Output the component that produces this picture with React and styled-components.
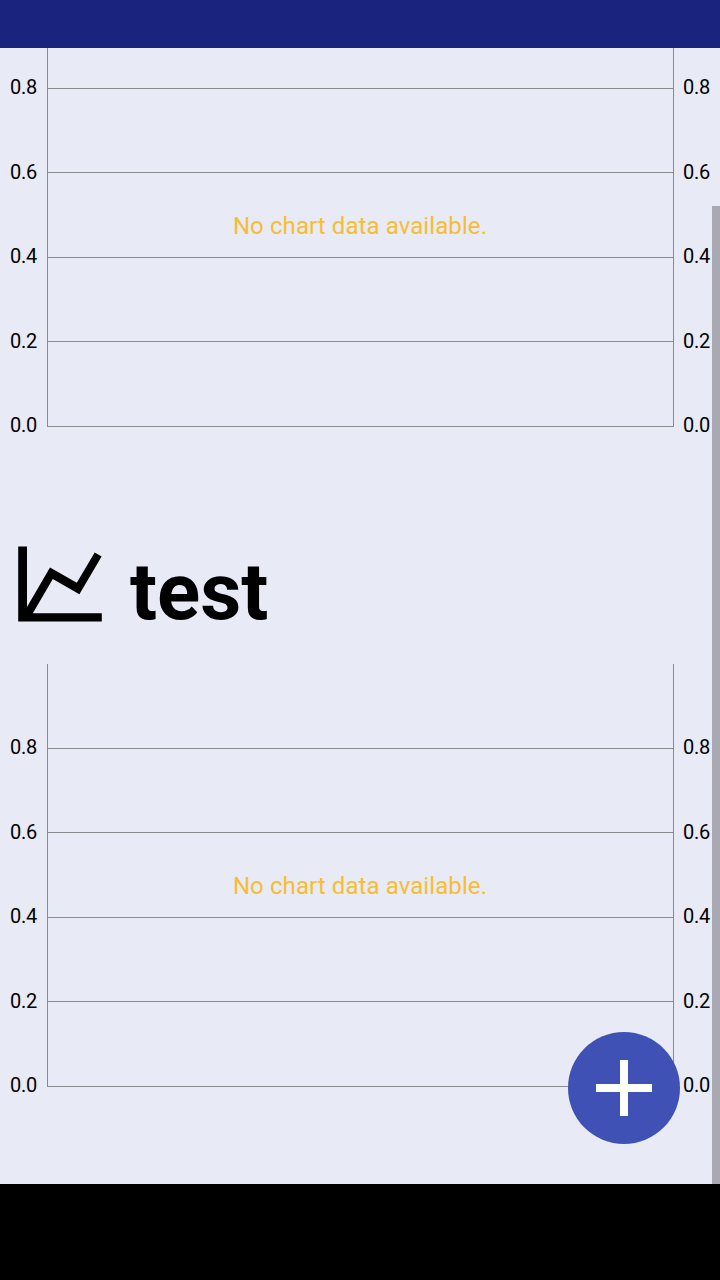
import React from "react";
import styled, { createGlobalStyle } from "styled-components";

const GlobalStyle = createGlobalStyle`
  * { box-sizing: border-box; }
  body { margin: 0; background: #000; font-family: Roboto, sans-serif; }
`;

const Screen = styled.div`
  display: flex;
  flex-direction: column;
  width: 720px;
  height: 1280px;
  overflow: hidden;
`;

const StatusBar = styled.header`
  height: 48px;
  background: #1a237e;
`;

const Content = styled.main`
  position: relative;
  flex: 1;
  background: #e8eaf6;
`;

const NavigationBar = styled.footer`
  height: 96px;
  background: #000;
`;

const ChartArea = styled.section`
  display: grid;
  position: relative;
`;

const ChartRow = styled.div`
  display: grid;
  grid-template-columns: 47px 627px 46px;
  height: ${({ $height }) => $height}px;
`;

const AxisLabel = styled.span`
  align-self: end;
  margin-bottom: ${({ $drop }) => -$drop}px;
  padding-left: ${({ $side }) => ($side === "right" ? 9 : 10)}px;
  font-size: 20px;
  line-height: 20px;
  letter-spacing: -0.25px;
  color: #000;
  white-space: nowrap;
`;

const PlotCell = styled.div`
  border: solid #888a8c;
  border-width: 0 1px 1px;
`;

const EmptyMessage = styled.p`
  position: absolute;
  left: 0;
  right: 0;
  bottom: 187px;
  margin: 0;
  font-size: 24px;
  line-height: 28px;
  letter-spacing: 0.09px;
  text-align: center;
  color: #f7bd33;
`;

const SectionHeader = styled.div`
  display: flex;
  align-items: flex-start;
  height: 237px;
  padding: 119px 18px 0;
  gap: 28px;
`;

const Title = styled.h1`
  margin: -1px 0 0;
  font-size: 80px;
  font-weight: 700;
  line-height: 94px;
  color: #000;
`;

const ScrollThumb = styled.div`
  position: absolute;
  top: 158px;
  right: 0;
  bottom: 0;
  width: 8px;
  background: #a8a9b3;
`;

const AddButton = styled.button`
  position: absolute;
  right: 40px;
  bottom: 40px;
  display: grid;
  place-items: center;
  width: 112px;
  height: 112px;
  padding: 0;
  border: 0;
  border-radius: 50%;
  background: #3f51b5;
`;

const ticks = [
  { label: "0.8", drop: 8 },
  { label: "0.6", drop: 9 },
  { label: "0.4", drop: 8 },
  { label: "0.2", drop: 9 },
  { label: "0.0", drop: 8 },
];

function Chart({ firstRow }) {
  const heights = [firstRow, 84, 85, 84, 85];
  return (
    <ChartArea>
      {ticks.map(({ label, drop }, i) => (
        <ChartRow key={label} $height={heights[i]}>
          <AxisLabel $side="left" $drop={drop}>{label}</AxisLabel>
          <PlotCell />
          <AxisLabel $side="right" $drop={drop}>{label}</AxisLabel>
        </ChartRow>
      ))}
      <EmptyMessage>No chart data available.</EmptyMessage>
    </ChartArea>
  );
}

function LineChartIcon() {
  return (
    <svg width="84" height="76" viewBox="0 0 84 76" aria-hidden="true">
      <path d="M.2.4H9V60.9L32 21.4 58.8 36.8 76.7 6.4 83.6 10.4 61.4 48.3 34.8 32.9 14.8 67.2H83.8V75.6H.2Z" />
    </svg>
  );
}

function PlusIcon() {
  return (
    <svg width="56" height="56" viewBox="0 0 56 56" aria-hidden="true">
      <path d="M24 0h8v24h24v8H32v24h-8V32H0v-8h24z" fill="#fff" />
    </svg>
  );
}

export default function App() {
  return (
    <Screen>
      <GlobalStyle />
      <StatusBar />
      <Content>
        <Chart firstRow={41} />
        <SectionHeader>
          <LineChartIcon />
          <Title>test</Title>
        </SectionHeader>
        <Chart firstRow={85} />
        <ScrollThumb />
        <AddButton aria-label="Add chart">
          <PlusIcon />
        </AddButton>
      </Content>
      <NavigationBar />
    </Screen>
  );
}
